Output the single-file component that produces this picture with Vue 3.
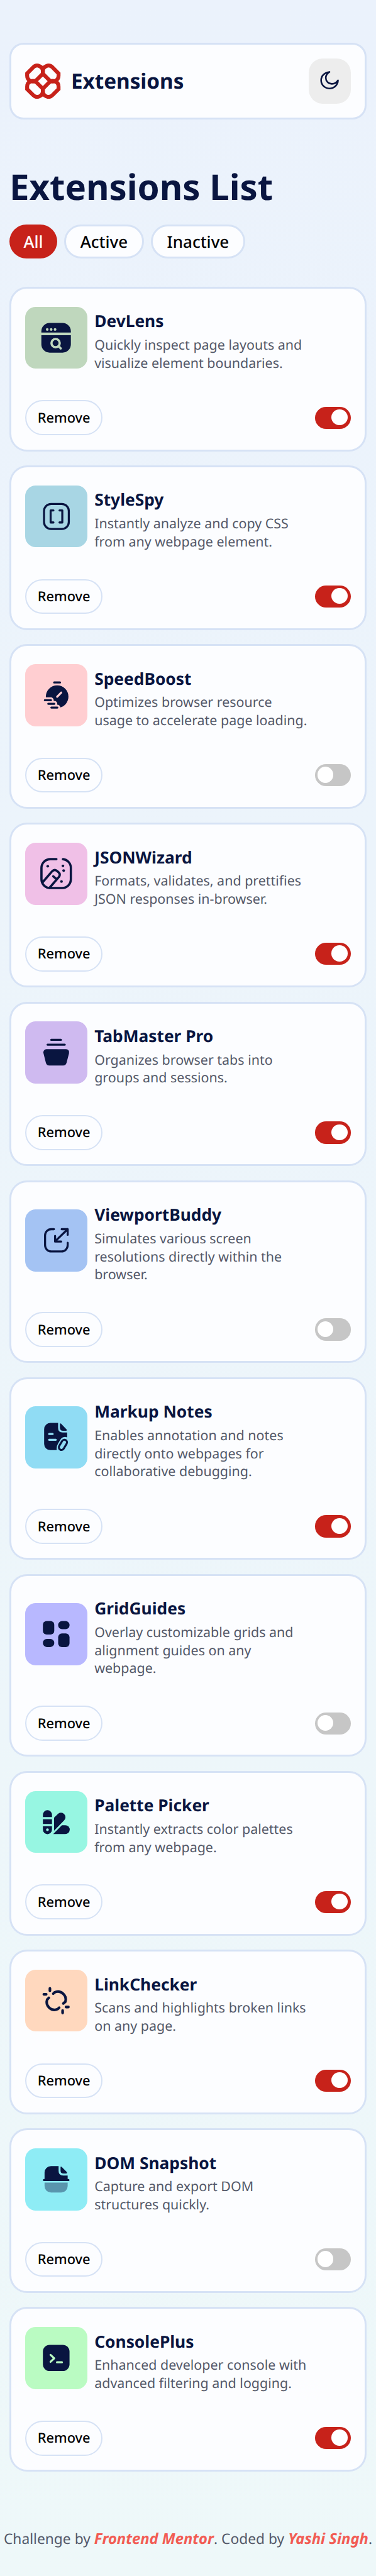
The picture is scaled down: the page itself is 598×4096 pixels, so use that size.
<script setup>
import { ref } from 'vue'

const filters = ['All', 'Active', 'Inactive']
const current = ref('All')

const ink = '#091540'
const line = (d, w = 2) =>
  `<path d="${d}" fill="none" stroke="${ink}" stroke-width="${w}" stroke-linecap="round" stroke-linejoin="round"/>`
const cut = (d, color, w = 2) =>
  `<path d="${d}" fill="none" stroke="${color}" stroke-width="${w}" stroke-linecap="round" stroke-linejoin="round"/>`
const fill = (d) => `<path d="${d}" fill="${ink}"/>`

const extensions = ref([
  {
    name: 'DevLens', tile: '#bfd7bd', on: true,
    text: 'Quickly inspect page layouts and\nvisualize element boundaries.',
    icon:
      fill('M15.7 24.9V23.6a8 8 0 0 1 8-8H36.3a8 8 0 0 1 8 8V24.9zM15.7 27.4H44.3V36.3a8 8 0 0 1-8 8H23.7a8 8 0 0 1-8-8z') +
      '<g fill="#bfd7bd"><circle cx="21.4" cy="21.9" r="1.3"/><circle cx="25.2" cy="21.9" r="1.3"/><circle cx="29" cy="21.9" r="1.3"/></g>' +
      '<circle cx="29.5" cy="35.1" r="4" fill="none" stroke="#bfd7bd" stroke-width="2.2"/>' +
      cut('M32.6 38.3L34.5 40.2', '#bfd7bd', 2.2),
  },
  {
    name: 'StyleSpy', tile: '#a8d6e4', on: true,
    text: 'Instantly analyze and copy CSS\nfrom any webpage element.',
    icon:
      line('M25.1 17.9H35.5a6.8 6.8 0 0 1 6.8 6.8V35.3a6.8 6.8 0 0 1-6.8 6.8H25.1a6.8 6.8 0 0 1-6.8-6.8V24.7a6.8 6.8 0 0 1 6.8-6.8z') +
      line('M27.4 24.1H24.7V35.8H27.4M33.3 24.1H36V35.8H33.3'),
  },
  {
    name: 'SpeedBoost', tile: '#ffced1', on: false,
    text: 'Optimizes browser resource\nusage to accelerate page loading.',
    icon:
      `<circle cx="31" cy="31.5" r="10.95" fill="${ink}"/>` +
      cut('M17 35H24.9M20 38.4H28.3M23 42.1H31.2', '#ffced1', 5.6) +
      '<path d="M17 35H24L30 43H18z" fill="#ffced1"/>' +
      line('M28.1 17.8H33.8M19.1 35H25M22.4 38.4H28.3M25.4 42.1H31.2') +
      cut('M31 31.6L34.9 27.6', '#ffced1'),
  },
  {
    name: 'JSONWizard', tile: '#f0c0e7', on: true,
    text: 'Formats, validates, and prettifies\nJSON responses in-browser.',
    icon:
      line('M30.3 15.9H24.3a8.5 8.5 0 0 0-8.5 8.5V35.4a8.5 8.5 0 0 0 8.5 8.5H35.8a8.5 8.5 0 0 0 8.5-8.5V24.4a8.5 8.5 0 0 0-7.7-8.5', 2.2) +
      line('M17 38.2L26 27.8Q28.3 25.4 30.9 27.4L32.3 28.6Q34.6 30.7 32.7 33.1L23.6 43.7', 2.2) +
      line('M27.2 32.5L30.2 35.1', 2.2) +
      `<g fill="${ink}"><circle cx="21.9" cy="22.7" r="1.3"/><circle cx="36.6" cy="22.4" r="1.3"/><circle cx="37.3" cy="27" r="1.3"/><circle cx="35.2" cy="37.6" r="1.3"/></g>`,
  },
  {
    name: 'TabMaster Pro', tile: '#cfbaf0', on: true,
    text: 'Organizes browser tabs into\ngroups and sessions.',
    icon:
      line('M25.3 17.9H34.7M21.7 22.6H38.4') +
      fill('M20.6 27H39.6A3 3 0 0 1 42.5 31L40.1 40.2Q39.4 42.8 36.8 42.8H23.4Q20.8 42.8 20.1 40.2L17.8 31A3 3 0 0 1 20.6 27z'),
  },
  {
    name: 'ViewportBuddy', tile: '#a4c3f3', on: false,
    text: 'Simulates various screen\nresolutions directly within the\nbrowser.',
    icon:
      line('M27.9 19.2H25.3a6 6 0 0 0-6 6V34.8a6 6 0 0 0 6 6H35.2a6 6 0 0 0 6-6V32.4') +
      line('M35.4 19.2H41.2V24.6M41.2 19.2L29 31M29 25.7V31.2H34.9'),
  },
  {
    name: 'Markup Notes', tile: '#90dcf4', on: true,
    text: 'Enables annotation and notes\ndirectly onto webpages for\ncollaborative debugging.',
    icon:
      fill('M31.9 16.2H24.4a6 6 0 0 0-6 6V36.5a6 6 0 0 0 6 6H30.6Q30 39 32 36L34.4 32Q37 28.6 40.7 30.2V25.4H36.4Q31.9 25.4 31.9 21z') +
      fill('M33.7 17.3Q33.9 16.2 34.8 16.9L40.2 22.5Q40.8 23.6 39.7 23.7H36.6Q33.7 23.7 33.7 20.8z') +
      cut('M23.2 26.9H26.7M23.2 32.5H29.7', '#90dcf4', 1.9) +
      '<rect x="34.05" y="32.1" width="5.1" height="10.6" rx="2.55" transform="rotate(31 36.6 37.4)" fill="none" stroke="#091540" stroke-width="1.9"/>',
  },
  {
    name: 'GridGuides', tile: '#b8b8ff', on: false,
    text: 'Overlay customizable grids and\nalignment guides on any\nwebpage.',
    icon:
      `<g fill="${ink}"><rect x="17.2" y="17.4" width="11" height="13.1" rx="3.6"/><rect x="32" y="17.4" width="11" height="7.9" rx="3.8"/><rect x="17.2" y="34.7" width="11" height="7.9" rx="3.8"/><rect x="32" y="29.4" width="11" height="13.2" rx="3.6"/></g>`,
  },
  {
    name: 'Palette Picker', tile: '#97f6e2', on: true,
    text: 'Instantly extracts color palettes\nfrom any webpage.',
    icon:
      fill('M17.2 25.1V22.9a4.4 4.4 0 0 1 8.8 0V25.1zM17.2 27.2H26V31.8H17.2zM17.2 33.9H26V37.3a4.4 4.4 0 0 1-8.8 0z') +
      '<circle cx="21.6" cy="37.4" r="1.3" fill="#97f6e2"/>' +
      fill('M28 25.7L31.6 22.2A4.35 4.35 0 0 1 37.8 28.4L28 38.4z') +
      fill('M27.2 41.6L35.6 33H38.9a4.3 4.3 0 0 1 0 8.6z'),
  },
  {
    name: 'LinkChecker', tile: '#ffd8be', on: true,
    text: 'Scans and highlights broken links\non any page.',
    icon:
      line('M24 18.1V20.4M18.1 23.8H20.4M36.3 39.6V41.9M39.6 36.1H41.9', 2.6) +
      line('M27.2 23.2L28.4 22A7.6 7.6 0 0 1 39 31L37 32.7M23 27.2L21.3 28.9A7.55 7.55 0 0 0 31.4 38.2L33 36.8', 2.5),
  },
  {
    name: 'DOM Snapshot', tile: '#8eecf5', on: false,
    text: 'Capture and export DOM\nstructures quickly.',
    icon:
      fill('M32.4 17.2H25a6.2 6.2 0 0 0-6.2 6.2V30H41.2V26.3H36.8Q32.4 26.3 32.4 21.8z') +
      fill('M34.3 18.2Q34.5 17.3 35.4 18L40.4 23Q41 24.2 39.9 24.4H37.2Q34.3 24.4 34.3 21.6z') +
      line('M18.2 30.7H42', 1.9) +
      `<path d="M18.8 33.2H41.2V36.6a6.2 6.2 0 0 1-6.2 6.2H25a6.2 6.2 0 0 1-6.2-6.2z" fill="${ink}" opacity=".4"/>`,
  },
  {
    name: 'ConsolePlus', tile: '#bafbc2', on: true,
    text: 'Enhanced developer console with\nadvanced filtering and logging.',
    icon:
      `<rect x="17.2" y="17.3" width="25.8" height="25.4" rx="6.6" fill="${ink}"/>` +
      cut('M24.6 27L28.2 30.4L24.6 33.8M30.8 34.2H35.7', '#bafbc2', 1.9),
  },
])

const loop =
  'M9.2 4.2L2.25 11.15V13.9A6.35 6.35 0 0 0 13.1 18.4L20 11.45V8.7A6.35 6.35 0 0 0 9.2 4.2Z'
</script>

<template>
  <div class="page">
    <header class="bar">
      <div class="brand">
        <svg class="logo" viewBox="0 0 40 40" fill="none" stroke="#c7221a" stroke-width="4.4">
          <path :d="loop" />
          <path :d="loop" transform="matrix(-1 0 0 1 40 0)" />
          <path :d="loop" transform="matrix(1 0 0 -1 0 40)" />
          <path :d="loop" transform="matrix(-1 0 0 -1 40 40)" />
        </svg>
        <span class="brand-name">Extensions</span>
      </div>
      <button class="theme" aria-label="Theme">
        <svg viewBox="0 0 22 22" fill="none" stroke="#091540" stroke-width="1.8" stroke-linejoin="round">
          <path d="M10.7 1.7C5.4 2 1.2 6 1.2 11.2A9.3 9.3 0 0 0 10.6 20.4C15.8 20.4 20.2 16.5 20.3 11.2C18.7 13.8 16 15.2 13.4 15.2C9.2 15 6.5 12 6.5 8.3C6.5 5.5 8.3 3.2 10.7 1.7Z" />
        </svg>
      </button>
    </header>

    <h1 class="title">Extensions List</h1>

    <nav class="filters">
      <button
        v-for="f in filters"
        :key="f"
        class="filter"
        :class="{ selected: f === current }"
        @click="current = f"
      >{{ f }}</button>
    </nav>

    <main class="list">
      <article v-for="e in extensions" :key="e.name" class="card">
        <div class="info">
          <svg class="tile" viewBox="0 0 60 60" :style="{ background: e.tile }" v-html="e.icon"></svg>
          <div class="words">
            <h2 class="name">{{ e.name }}</h2>
            <p class="text">{{ e.text }}</p>
          </div>
        </div>
        <div class="actions">
          <button class="remove">Remove</button>
          <button class="switch" :class="{ on: e.on }" :aria-label="e.name" @click="e.on = !e.on">
            <span class="knob"></span>
          </button>
        </div>
      </article>
    </main>

    <footer class="foot">
      Challenge by <a>Frontend Mentor</a>. Coded by <a>Yashi Singh</a>.
    </footer>
  </div>
</template>

<style>
html {
  font-size: 7.0353px;
}
body {
  margin: 0;
}
</style>

<style scoped>
.page {
  box-sizing: border-box;
  width: 100%;
  height: 582.2rem;
  padding: 9.6rem 2.125rem 0;
  overflow: hidden;
  background: linear-gradient(180deg, #ebf2fc 0%, #eef8f9 100%);
  font-family: 'Noto Sans', sans-serif;
  text-rendering: geometricPrecision;
  color: #091540;
}
button {
  font-family: inherit;
  text-rendering: inherit;
  margin: 0;
  padding: 0;
  border: 0;
  color: #000;
}
.bar {
  box-sizing: border-box;
  height: 17.4rem;
  display: flex;
  align-items: center;
  justify-content: space-between;
  padding: 0 3.2rem;
  border: 0.4265rem solid #d6e2f5;
  border-radius: 3.2rem;
  background: #fcfdff;
}
.brand {
  display: flex;
  align-items: center;
}
.logo {
  width: 8rem;
  height: 8rem;
}
.brand-name {
  margin-left: 2.3rem;
  padding-bottom: 0.3rem;
  font-size: 4.73rem;
  font-weight: 700;
  line-height: 7.7rem;
}
.theme {
  width: 9.5rem;
  height: 10.2rem;
  display: flex;
  align-items: center;
  justify-content: center;
  border-radius: 3.2rem;
  background: #ededed;
}
.theme svg {
  width: 4.4rem;
  height: 4.4rem;
  margin-bottom: 0.5rem;
}
.title {
  margin: 9.75rem 0 0;
  font-size: 8rem;
  font-weight: 700;
  line-height: 11rem;
}
.filters {
  display: flex;
  gap: 1.6rem;
  margin-top: 2.95rem;
}
.filter {
  box-sizing: border-box;
  height: 7.7rem;
  padding: 0 3.2rem;
  border: 0.4265rem solid #d6e2f5;
  border-radius: 4rem;
  background: #fcfdff;
  font-size: 3.7rem;
  font-weight: 500;
}
.filter.selected {
  border: 0;
  background: #c7221a;
  color: #fff;
}
.list {
  display: grid;
  gap: 3.2rem;
  margin-top: 6.4rem;
}
.card {
  padding: 3.2rem;
  border: 0.4265rem solid #d6e2f5;
  border-radius: 4rem;
  background: #fcfdff;
}
.info {
  display: flex;
  align-items: center;
  gap: 1.6rem;
}
.tile {
  flex: none;
  width: 14rem;
  height: 14rem;
  border-radius: 2.4rem;
}
.words {
  padding-top: 1.7rem;
}
.name {
  margin: 0;
  font-size: 3.744rem;
  font-weight: 700;
  line-height: 4.9rem;
}
.text {
  margin: 1rem 0 0;
  font-size: 3.05rem;
  line-height: 4.1rem;
  white-space: pre;
  color: #545969;
}
.actions {
  display: flex;
  align-items: center;
  justify-content: space-between;
  margin-top: 6.25rem;
}
.remove {
  box-sizing: border-box;
  width: 17.4rem;
  height: 7.9rem;
  border: 0.285rem solid #d6e2f5;
  border-radius: 4rem;
  background: transparent;
  font-size: 3.1rem;
  font-weight: 500;
}
.switch {
  box-sizing: border-box;
  display: flex;
  width: 8rem;
  height: 5rem;
  padding: 0.6rem 0.5rem;
  border-radius: 2.5rem;
  background: #c6c6c6;
}
.switch.on {
  justify-content: flex-end;
  padding-right: 0.7rem;
  background: #c7221a;
}
.knob {
  width: 3.6rem;
  height: 3.6rem;
  border-radius: 50%;
  background: #fff;
}
.foot {
  margin: 12.9rem -2.125rem 0;
  font-size: 3.24rem;
  line-height: 4.4rem;
  text-align: center;
  white-space: nowrap;
  color: #545969;
}
.foot a {
  color: #f25c54;
  font-size: 3.38rem;
  font-weight: 700;
  font-style: italic;
}
</style>
